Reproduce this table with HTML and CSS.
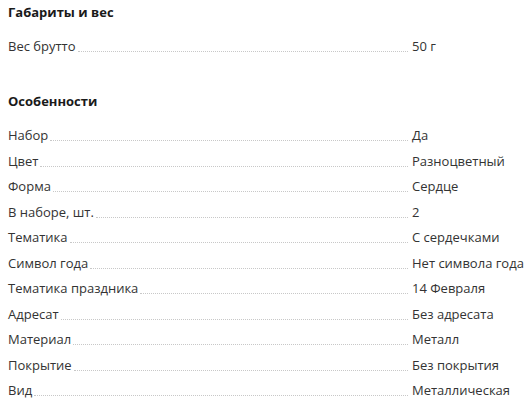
FILE: index.html
```html
<!DOCTYPE html>
<html lang="ru">
<head>
<meta charset="utf-8">
<link rel="stylesheet" href="styles.css">
</head>
<body>
<div class="page">
  <section class="section">
    <h3 class="title">Габариты и вес</h3>
    <dl class="list">
      <div class="row"><dt class="label"><span>Вес брутто</span></dt><dd class="value">50 г</dd></div>
    </dl>
  </section>
  <section class="section">
    <h3 class="title">Особенности</h3>
    <dl class="list">
      <div class="row"><dt class="label"><span>Набор</span></dt><dd class="value">Да</dd></div>
      <div class="row"><dt class="label"><span>Цвет</span></dt><dd class="value">Разноцветный</dd></div>
      <div class="row"><dt class="label"><span>Форма</span></dt><dd class="value">Сердце</dd></div>
      <div class="row"><dt class="label"><span>В наборе, шт.</span></dt><dd class="value">2</dd></div>
      <div class="row"><dt class="label"><span>Тематика</span></dt><dd class="value">С сердечками</dd></div>
      <div class="row"><dt class="label"><span>Символ года</span></dt><dd class="value">Нет символа года</dd></div>
      <div class="row"><dt class="label"><span>Тематика праздника</span></dt><dd class="value">14 Февраля</dd></div>
      <div class="row"><dt class="label"><span>Адресат</span></dt><dd class="value">Без адресата</dd></div>
      <div class="row"><dt class="label"><span>Материал</span></dt><dd class="value">Металл</dd></div>
      <div class="row"><dt class="label"><span>Покрытие</span></dt><dd class="value">Без покрытия</dd></div>
      <div class="row"><dt class="label"><span>Вид</span></dt><dd class="value">Металлическая</dd></div>
    </dl>
  </section>
</div>
</body>
</html>
```
FILE: styles.css
```css
html, body {
  margin: 0;
  padding: 0;
  background: #fff;
}
.page {
  padding: 4px 8px 0 8px;
  font-family: "Open Sans", "Liberation Sans", sans-serif;
  font-size: 13px;
  line-height: 16px;
  color: #333;
}
.section {
  margin-bottom: 39px;
}
.section:last-child {
  margin-bottom: 0;
}
.title {
  margin: 0 0 18px 0;
  font-size: 13px;
  line-height: 16px;
  font-weight: 700;
  color: #1a1a1a;
}
.list {
  margin: 0;
  display: flex;
  flex-direction: column;
  gap: 9.5px;
}
.row {
  display: grid;
  grid-template-columns: 400px 1fr;
  column-gap: 4px;
}
.label {
  display: flex;
  align-items: baseline;
  margin: 0;
  white-space: nowrap;
}
.label::after {
  content: "";
  flex: 1;
  margin-left: 2px;
  border-bottom: 1px dotted #c8c8c8;
  height: 0;
  position: relative;
  top: 1px;
}
.value {
  margin: 0;
  white-space: nowrap;
}
```
